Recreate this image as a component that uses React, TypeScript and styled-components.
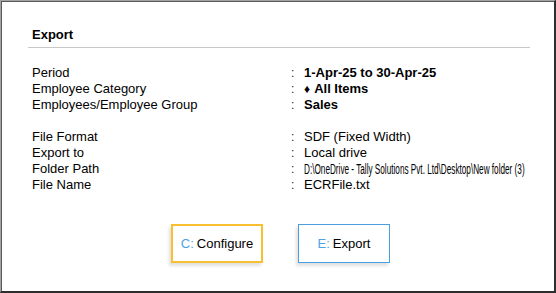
import styled, { createGlobalStyle } from "styled-components"

const Global = createGlobalStyle`
    html, body {
        margin: 0;
        padding: 0;
        background: #ffffff;
    }
    body {
        font-family: "Liberation Sans", Arial, sans-serif;
        color: #000;
    }
`

const Window = styled.div`
    width: 556px;
    height: 293px;
    box-sizing: border-box;
    overflow: hidden;
    background: #fff;
    border-top: 1px solid #a3a3a3;
    border-left: 1px solid #a3a3a3;
    border-right: 2px solid #2e2e2e;
    border-bottom: 2px solid #2e2e2e;
    box-shadow: inset 1px 1px 0 #5a5a5a;
    padding: 0 24px 0 27px;
    display: flex;
    flex-direction: column;
`

const Header = styled.div`
    margin-top: 26px;
    padding: 0 0 4px 4px;
    border-bottom: 1px solid #c8c8c8;
    font-size: 13px;
    line-height: 16px;
    font-weight: bold;
`

const Fields = styled.div`
    margin-top: 17px;
    padding-left: 4px;
    display: grid;
    grid-template-columns: 258px 14px minmax(0, 1fr);
    grid-auto-rows: 16px;
    font-size: 13px;
    line-height: 16px;
`

const Label = styled.div`
    white-space: nowrap;
`

const Colon = styled.div`
    font-size: 12px;
    color: #222;
    padding-left: 1px;
`

const Value = styled.div<{ $bold?: boolean }>`
    white-space: nowrap;
    overflow: hidden;
    font-weight: ${p => (p.$bold ? "bold" : "normal")};
`

const Narrow = styled.span`
    display: inline-block;
    font-size: 14px;
    transform: scaleX(0.585);
    transform-origin: left center;
`

const Diamond = styled.span`
    font-size: 12px;
    margin-right: 4px;
`

const Spacer = styled.div`
    grid-column: 1 / -1;
`

const Buttons = styled.div`
    margin-top: 31px;
    padding-left: 143px;
    display: flex;
    gap: 35px;
`

const Button = styled.button<{ $focused?: boolean }>`
    width: 92px;
    height: 39px;
    box-sizing: border-box;
    background: #fff;
    font-family: "Liberation Sans", Arial, sans-serif;
    font-size: 13px;
    color: #000;
    padding: 0;
    cursor: pointer;
    border: ${p => (p.$focused ? "2px solid #f8c030" : "1px solid #4a9ede")};
    box-shadow: -2px 3px 3px rgba(0, 0, 0, 0.12);
    span {
        color: #4ea4e2;
        margin-right: 3px;
    }
`

const rows: { label: string; value: React.ReactNode; bold?: boolean }[] = [
    { label: "Period", value: "1-Apr-25 to 30-Apr-25", bold: true },
    { label: "Employee Category", value: <><Diamond>♦</Diamond>All Items</>, bold: true },
    { label: "Employees/Employee Group", value: "Sales", bold: true },
]

const fileRows: { label: string; value: React.ReactNode }[] = [
    { label: "File Format", value: "SDF (Fixed Width)" },
    { label: "Export to", value: "Local drive" },
    { label: "Folder Path", value: <Narrow>D:\OneDrive - Tally Solutions Pvt. Ltd\Desktop\New folder (3)</Narrow> },
    { label: "File Name", value: "ECRFile.txt" },
]

export default function App() {
    return (
        <>
            <Global />
            <Window>
                <Header>Export</Header>
                <Fields>
                    {rows.map(r => (
                        <>
                            <Label key={r.label}>{r.label}</Label>
                            <Colon>:</Colon>
                            <Value $bold={r.bold}>{r.value}</Value>
                        </>
                    ))}
                    <Spacer />
                    {fileRows.map(r => (
                        <>
                            <Label key={r.label}>{r.label}</Label>
                            <Colon>:</Colon>
                            <Value>{r.value}</Value>
                        </>
                    ))}
                </Fields>
                <Buttons>
                    <Button $focused><span>C:</span>Configure</Button>
                    <Button><span>E:</span>Export</Button>
                </Buttons>
            </Window>
        </>
    )
}
